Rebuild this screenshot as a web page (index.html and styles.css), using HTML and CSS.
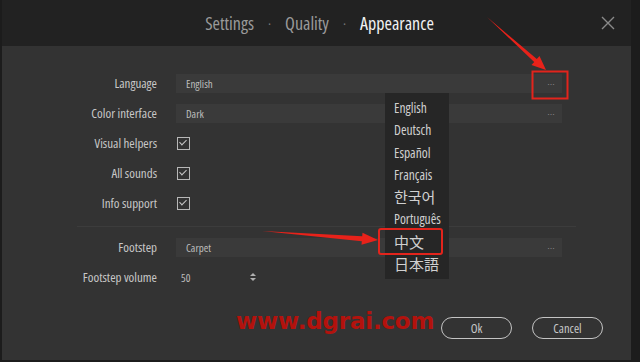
FILE: index.html
```html
<!DOCTYPE html>
<html lang="en">
<head>
    <meta charset="UTF-8">
    <title>Settings - Appearance</title>
    <link rel="stylesheet" href="styles.css">
</head>
<body>
    <div class="window">
        <header class="titlebar">
            <nav class="tabs">
                <span class="tab">Settings</span>
                <span class="dot">·</span>
                <span class="tab">Quality</span>
                <span class="dot">·</span>
                <span class="tab active">Appearance</span>
            </nav>
            <svg class="close" width="14" height="14" viewBox="0 0 14 14">
                <path d="M1 1L13 13M13 1L1 13" stroke="#8a8a8a" stroke-width="1.4" fill="none"/>
            </svg>
        </header>

        <section class="form">
            <div class="row">
                <label>Language</label>
                <div class="field"><span>English</span><span class="more">...</span></div>
            </div>
            <div class="row">
                <label>Color interface</label>
                <div class="field"><span>Dark</span><span class="more">...</span></div>
            </div>
            <div class="row">
                <label>Visual helpers</label>
                <span class="check"></span>
            </div>
            <div class="row">
                <label>All sounds</label>
                <span class="check"></span>
            </div>
            <div class="row">
                <label>Info support</label>
                <span class="check"></span>
            </div>
            <hr class="divider">
            <div class="row">
                <label>Footstep</label>
                <div class="field"><span>Carpet</span><span class="more">...</span></div>
            </div>
            <div class="row">
                <label>Footstep volume</label>
                <div class="spin">
                    <span>50</span>
                    <span class="arrows"><i class="up"></i><i class="down"></i></span>
                </div>
            </div>
        </section>

        <footer class="actions">
            <button class="btn">Ok</button>
            <button class="btn">Cancel</button>
        </footer>

        <ul class="dropdown">
            <li>English</li>
            <li>Deutsch</li>
            <li>Español</li>
            <li>Français</li>
            <li class="cjk" lang="ko">한국어</li>
            <li>Português</li>
            <li class="cjk" lang="zh">中文</li>
            <li class="cjk" lang="ja">日本語</li>
        </ul>

        <div class="watermark">www.dgrai.com</div>

        <svg class="marks" width="640" height="362" viewBox="0 0 640 362">
            <rect x="532.5" y="71.5" width="35" height="27" fill="none" stroke="#e3241c" stroke-width="2"/>
            <rect x="379" y="229" width="63" height="25" rx="2" fill="none" stroke="#e3241c" stroke-width="2"/>
            <polygon points="487,17 536.8,59.1 539.5,56.1 546,70 531.5,65.1 534.2,62.1" fill="#e8221a"/>
            <polygon points="262,231 362.2,236.3 362.5,232.8 378,240 361.5,244.8 361.8,241.3" fill="#e8221a"/>
        </svg>
    </div>
</body>
</html>
```

FILE: styles.css
```css
* { margin: 0; padding: 0; box-sizing: border-box; }
body { background: #1b1b1b; font-family: 'Open Sans', 'DejaVu Sans Condensed', sans-serif; font-stretch: 75%; color: #c8c8c8; }
.window { position: relative; width: 640px; height: 362px; background: #333; border-left: 2px solid #1c1c1c; border-right: 9px solid #1c1c1c; border-bottom: 2px solid #1c1c1c; display: flex; flex-direction: column; overflow: hidden; }

.titlebar { height: 46px; background: #222; display: flex; align-items: center; justify-content: center; position: relative; }
.tabs { display: flex; align-items: center; gap: 14px; font-size: 18px; margin-left: 6px; }
.tab { color: #9a9a9a; }
.tab.active { color: #f2f2f2; }
.dot { color: #777; font-size: 14px; }
.close { position: absolute; right: 16px; top: 16px; }

.form { padding-top: 22px; }
.row { height: 30px; display: grid; grid-template-columns: 155px 386px; column-gap: 19px; align-items: center; }
.row label { text-align: right; font-size: 13px; color: #c8c8c8; }
.field { height: 19px; background: #3a3a3a; display: flex; align-items: center; justify-content: space-between; padding: 0 7px 0 10px; font-size: 11px; color: #bdbdbd; }
.field .more { color: #8d8d8d; font-size: 9px; letter-spacing: 0.5px; padding-bottom: 3px; }

.check { width: 13px; height: 13px; margin-left: 1px; border: 1.5px solid #b8b8b8; position: relative; }
.check::after { content: ''; position: absolute; left: 3px; top: 0px; width: 3px; height: 6px; border: solid #c8c8c8; border-width: 0 1.5px 1.5px 0; transform: rotate(45deg); }

.divider { border: none; border-top: 1px solid #3c3c3c; margin: 8px 55px 5px 75px; }

.spin { width: 80px; display: flex; align-items: center; justify-content: space-between; padding-left: 5px; font-size: 11px; color: #bdbdbd; }
.arrows { display: flex; flex-direction: column; gap: 2px; }
.arrows i { display: block; width: 0; height: 0; border-left: 3px solid transparent; border-right: 3px solid transparent; }
.arrows .up { border-bottom: 3px solid #b0b0b0; }
.arrows .down { border-top: 3px solid #b0b0b0; }

.actions { margin-top: auto; display: flex; justify-content: flex-end; gap: 20px; padding: 0 28px 21px 0; }
.btn { width: 71px; height: 22px; border-radius: 11px; border: 1.5px solid #c4c4c4; background: transparent; color: #c8c8c8; font-family: inherit; font-stretch: inherit; font-size: 12.5px; }

.dropdown { position: absolute; left: 383px; top: 93px; width: 64px; padding: 4px 0 4px 9px; background: #262626; list-style: none; }
.dropdown li { height: 22.3px; line-height: 22.3px; font-size: 13.5px; color: #d0d0d0; }
.dropdown li.cjk { font-family: 'Noto Sans CJK SC', 'Noto Sans CJK KR', sans-serif; font-stretch: normal; font-size: 15px; }

.watermark { position: absolute; left: 234px; top: 308px; font-family: 'DejaVu Sans', sans-serif; font-stretch: normal; font-weight: bold; font-size: 23px; color: #b3120d; letter-spacing: -0.2px; }
.marks { position: absolute; left: -2px; top: 0; pointer-events: none; }
```
